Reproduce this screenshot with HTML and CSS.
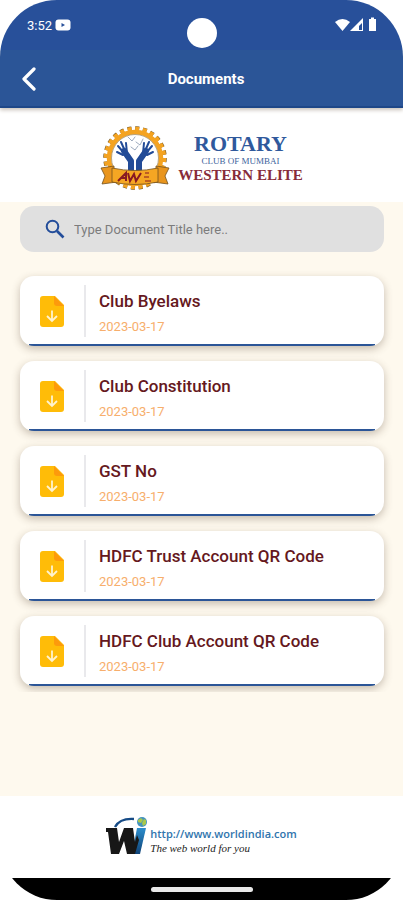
FILE: index.html
```html
<!DOCTYPE html>
<html lang="en">
<head>
<meta charset="utf-8">
<meta name="viewport" content="width=device-width, initial-scale=1">
<title>Documents</title>
<link rel="stylesheet" href="styles.css">
</head>
<body>
<svg class="defs" aria-hidden="true">
  <symbol id="file" viewBox="0 0 24 31">
    <path d="M3 0h12l9 9v19a3 3 0 0 1-3 3H3a3 3 0 0 1-3-3V3a3 3 0 0 1 3-3z" fill="#ffbc08"/>
    <path d="M14 0l10 10h-7a3 3 0 0 1-3-3z" fill="#fd9a0c"/>
    <path d="M12 14.500v10M7 20l5 5 5-5" fill="none" stroke="#fff3cf" stroke-width="1.800"/>
  </symbol>
</svg>
<div class="phone">
  <div class="status">
    <span class="time">3:52</span>
    <svg class="video" viewBox="0 0 16 12" aria-hidden="true"><rect x="0.500" y="0.500" width="15" height="11" rx="3" fill="#fff"/><path d="M6.500 4v4L10 6z" fill="#28509a"/></svg>
    <span class="camera"></span>
    <svg class="signals" viewBox="0 0 44 16" aria-hidden="true">
      <path d="M0 5Q7.500-1 15 5L7.500 14z" fill="#fff"/>
      <path d="M28 1v13H15z" fill="#fff"/><path d="M27 6v7h-3V9z" fill="#28509a"/>
      <path d="M34 2h2V0.500h3V2h2v12h-7z" fill="#fff"/>
    </svg>
  </div>
  <header class="bar">
    <button class="back" aria-label="Back"><svg viewBox="0 0 16 24" aria-hidden="true"><path d="M13 2L3 12l10 10" fill="none" stroke="#fff" stroke-width="3.200" stroke-linecap="round" stroke-linejoin="round"/></svg></button>
    <h1>Documents</h1>
  </header>
  <div class="brand">
    <svg class="emblem" viewBox="0 0 70 64" aria-hidden="true">
      <circle cx="35" cy="32" r="29.500" fill="none" stroke="#6b552c" stroke-width="4.500" stroke-dasharray="4 3.723"/>
      <circle cx="35" cy="32" r="29" fill="none" stroke="#f4a321" stroke-width="4.500" stroke-dasharray="4 3.592"/>
      <circle cx="35" cy="32" r="26" fill="#fff" stroke="#f4a321" stroke-width="4.500"/>
      <circle cx="35" cy="32" r="23.500" fill="#fff" stroke="#8a6a32" stroke-width="0.600"/>
      <g fill="none" stroke="#224b97" stroke-linecap="round" stroke-linejoin="round">
        <path d="M31 44v-9l-7-10M39 44v-9l7-10" stroke-width="6"/>
        <path d="M24 27l-6-7M25 25l-4-9M27 27l-1-10M23 29l-6-3M46 27l6-7M45 25l4-9M43 27l1-10M47 29l6-3" stroke-width="2"/>
        <path d="M35 26v15" stroke="#fff" stroke-width="1"/>
        <path d="M28 11l4 4 3-4M36 16l4 3 3-6M31 21l4 3 3-4" stroke="#8596ad" stroke-width="0.800"/>
      </g>
      <path d="M1 42l13-2v14l3 2-15 2 3-8zM69 42l-13-2v14l-3 2 15 2-3-8z" fill="#e9951d" stroke="#72501e" stroke-width="0.800"/>
      <path d="M12 42q23 5 46 0v14q-23 5-46 0z" fill="#f5a623" stroke="#72501e" stroke-width="0.800"/>
      <path d="M18 55l8-8v8M22 52h5M28 47l2 8 4-7 2 7 5-8" fill="none" stroke="#871923" stroke-width="2"/>
      <path d="M45 47h4M44 51h5M45 55h6" fill="none" stroke="#871923" stroke-width="1"/>
    </svg>
    <div class="club">
      <span class="club-name">ROTARY</span>
      <span class="club-city">CLUB OF MUMBAI</span>
      <span class="club-area">WESTERN ELITE</span>
    </div>
  </div>
  <main>
    <label class="search">
      <svg viewBox="0 0 20 20" aria-hidden="true"><circle cx="7.500" cy="7.500" r="5.800" fill="none" stroke="#234d9a" stroke-width="2"/><path d="M12 12l6.500 6.500" stroke="#234d9a" stroke-width="2.600"/></svg>
      <input type="text" placeholder="Type Document Title here.." aria-label="Document title">
    </label>
    <ul class="list">
      <li class="card"><svg class="file"><use href="#file"/></svg><div class="info"><h2>Club Byelaws</h2><time>2023-03-17</time></div></li>
      <li class="card"><svg class="file"><use href="#file"/></svg><div class="info"><h2>Club Constitution</h2><time>2023-03-17</time></div></li>
      <li class="card"><svg class="file"><use href="#file"/></svg><div class="info"><h2>GST No</h2><time>2023-03-17</time></div></li>
      <li class="card"><svg class="file"><use href="#file"/></svg><div class="info"><h2>HDFC Trust Account QR Code</h2><time>2023-03-17</time></div></li>
      <li class="card"><svg class="file"><use href="#file"/></svg><div class="info"><h2>HDFC Club Account QR Code</h2><time>2023-03-17</time></div></li>
    </ul>
  </main>
  <footer>
    <svg class="maker" viewBox="0 0 42 40" aria-hidden="true">
      <defs><linearGradient id="stem" x1="0" y1="0" x2="0" y2="1"><stop offset="0" stop-color="#2b8dcc"/><stop offset="1" stop-color="#104377"/></linearGradient></defs>
      <path d="M31 12h9l-6 26h-8z" fill="url(#stem)"/>
      <path d="M0 12h11l2 14 5-14h9l2 14 2-7 2 5-4 14h-8l-3-13-5 13H5L2 16H0z" fill="#171717"/>
      <path d="M9 11Q14 2 28 3" fill="none" stroke="#164b86" stroke-width="2.400"/>
      <circle cx="36" cy="6" r="5" fill="#4593bd"/>
      <path d="M32 4l3-2 2 2-2 3-3-1zM38 3l2 1v4l-3 2-1-3z" fill="#a9c84b"/>
    </svg>
    <div class="maker-text">
      <a href="http://www.worldindia.com">http://www.worldindia.com</a>
      <span>The web world for you</span>
    </div>
  </footer>
  <div class="nav"><span class="handle"></span></div>
</div>
</body>
</html>
```
FILE: styles.css
```css
* { box-sizing: border-box; }

body {
  margin: 0;
  background: #fff;
  font-family: Roboto, sans-serif;
}

.defs { position: absolute; width: 0; height: 0; }

.phone {
  display: flex;
  flex-direction: column;
  min-height: 100vh;
  overflow: hidden;
  border-radius: 57px;
  background: #fff;
}

.status {
  position: relative;
  display: flex;
  align-items: center;
  height: 50px;
  padding: 0 24px 0 27px;
  background: #28509a;
  color: #fff;
}
.time { font-size: 13px; }
.video { width: 16px; height: 12px; margin-left: 3px; }
.signals { width: 44px; height: 16px; margin-left: auto; }
.camera {
  position: absolute;
  top: 18px;
  left: 50%;
  width: 30px;
  height: 30px;
  margin-left: -15px;
  border-radius: 50%;
  background: #fff;
}

.bar {
  display: grid;
  grid-template-columns: 60px 1fr 60px;
  align-items: center;
  height: 58px;
  padding: 0 6px 0 15px;
  background: #2b5597;
  border-bottom: 2px solid #1e4788;
  box-shadow: 0 2px 4px #c9c2ba;
  color: #fff;
}
.bar h1 {
  margin: 0;
  padding-top: 2px;
  font-size: 15px;
  font-weight: 700;
  text-align: center;
}
.back {
  display: flex;
  width: 28px;
  padding: 2px 6px 0;
  border: 0;
  background: none;
}
.back svg { width: 16px; height: 24px; }

.brand {
  display: flex;
  justify-content: center;
  align-items: center;
  gap: 8px;
  height: 94px;
  padding-top: 6px;
}
.emblem { width: 70px; height: 64px; }
.club {
  display: flex;
  flex-direction: column;
  align-items: center;
  gap: 2px;
  font-family: "Liberation Serif", serif;
  white-space: nowrap;
}
.club-name { font-size: 22px; font-weight: 700; line-height: 20px; color: #2f599c; }
.club-city { font-size: 9px; line-height: 10px; color: #40639c; }
.club-area { font-size: 15px; font-weight: 700; line-height: 14px; color: #872c3a; }

main {
  flex: 1;
  padding: 4px 10px 0;
  background: #fef9ee;
}

.search {
  display: flex;
  align-items: center;
  gap: 9px;
  height: 46px;
  margin: 0 9px 0 10px;
  padding: 0 25px;
  border-radius: 14px;
  background: #e0e0e0;
}
.search svg { width: 20px; height: 20px; }
.search input {
  flex: 1;
  min-width: 0;
  padding: 0;
  border: 0;
  outline: 0;
  background: none;
  font: 13px Roboto, sans-serif;
}
.search input::placeholder { color: #7c7c7c; opacity: 1; }

.list {
  display: flex;
  flex-direction: column;
  gap: 15px;
  margin: 14px 0 0;
  padding: 10px 9px 6px 10px;
  overflow: hidden;
  list-style: none;
}
.card {
  display: flex;
  align-items: center;
  height: 70px;
  padding-left: 20px;
  border-radius: 14px;
  background: linear-gradient(#2b5597, #2b5597) center bottom / calc(100% - 18px) 2px no-repeat #fff;
  box-shadow: 0 3px 8px rgba(70, 50, 30, 0.3);
}
.file { width: 24px; height: 31px; }
.info {
  display: flex;
  flex-direction: column;
  justify-content: center;
  height: 52px;
  margin-left: 20px;
  padding: 8px 0 0 13px;
  border-left: 2px solid #e9e9ec;
}
.info h2 {
  margin: 0;
  font-size: 17px;
  line-height: 24px;
  font-weight: 500;
  color: #651820;
}
.info time { font-size: 13px; line-height: 28px; color: #f7ae6c; }

footer {
  display: flex;
  justify-content: center;
  gap: 2px;
  height: 82px;
  padding-top: 20px;
}
.maker { width: 42px; height: 40px; }
.maker-text { display: flex; flex-direction: column; padding-top: 11px; }
.maker-text a {
  font: 600 11px/14px "Open Sans", sans-serif;
  color: #2f74ad;
  text-decoration: none;
}
.maker-text span { font: italic 11px/14px "Liberation Serif", serif; color: #222; }

.nav {
  display: flex;
  justify-content: center;
  align-items: center;
  height: 22px;
  background: #000;
}
.handle { width: 102px; height: 5px; border-radius: 3px; background: #e8e8e8; }
```
